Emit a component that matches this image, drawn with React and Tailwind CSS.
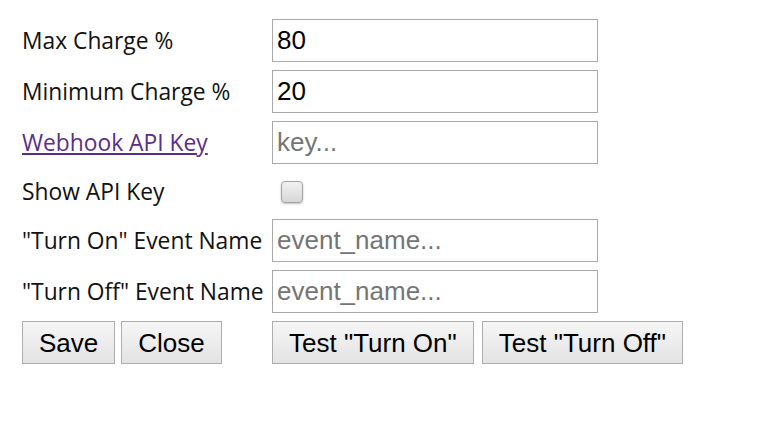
import React, { useState } from 'react';

const labelFont = { fontFamily: '"Open Sans", "Noto Sans", sans-serif' };

const Field = ({ placeholder, defaultValue }) => (
  <input
    type="text"
    defaultValue={defaultValue}
    placeholder={placeholder}
    className="w-[326px] h-[43px] border border-[#a9a9a9] bg-white px-[4px] text-[26px] text-black placeholder:text-[#757575] outline-none font-['Liberation_Sans',Arial,sans-serif]"
  />
);

const Btn = ({ children }) => (
  <button className="h-[43px] px-[16px] border border-[#adadad] bg-gradient-to-b from-[#f6f6f6] to-[#e3e3e3] text-[26px] text-black whitespace-nowrap font-['Liberation_Sans',Arial,sans-serif]">
    {children}
  </button>
);

const App = () => {
  const [showKey, setShowKey] = useState(false);

  return (
    <div className="w-[760px] h-[436px] bg-white pt-[19px] pl-[22px]">
      <div className="grid grid-cols-[250px_326px] gap-y-[8px] items-center text-[22.8px] leading-[32px] text-[#111]" style={labelFont}>
        <div>Max Charge %</div>
        <Field defaultValue="80" />

        <div>Minimum Charge %</div>
        <Field defaultValue="20" />

        <div>
          <a href="#" className="text-[#5a2d8c] underline">Webhook API Key</a>
        </div>
        <Field placeholder="key..." />

        <div>Show API Key</div>
        <div className="h-[39px] flex items-center pl-[9px]">
          <input
            type="checkbox"
            checked={showKey}
            onChange={(e) => setShowKey(e.target.checked)}
            className="appearance-none w-[22px] h-[22px] rounded-[4px] border border-[#a3a3a3] bg-gradient-to-b from-[#f2f2f2] to-[#d6d6d6] shadow-[0_1px_2px_rgba(0,0,0,0.25)]"
          />
        </div>

        <div>"Turn On" Event Name</div>
        <Field placeholder="event_name..." />

        <div>"Turn Off" Event Name</div>
        <Field placeholder="event_name..." />

        <div className="flex gap-[6px]">
          <Btn>Save</Btn>
          <Btn>Close</Btn>
        </div>
        <div className="flex gap-[8px]">
          <Btn>Test "Turn On"</Btn>
          <Btn>Test "Turn Off"</Btn>
        </div>
      </div>
    </div>
  );
};

export default App;
